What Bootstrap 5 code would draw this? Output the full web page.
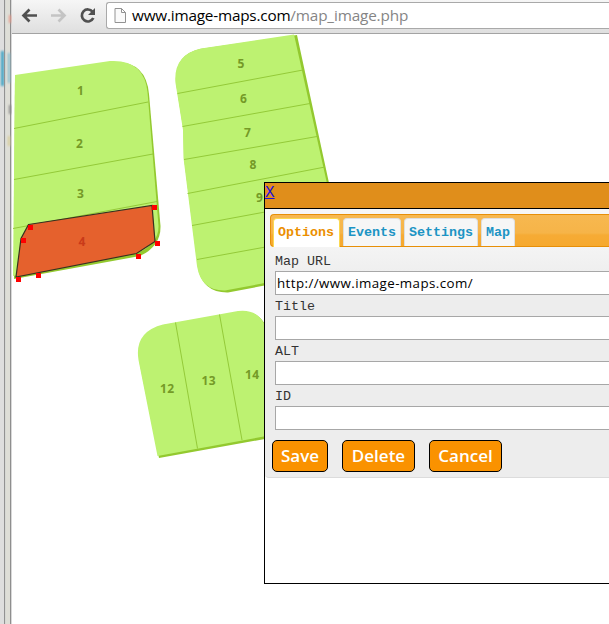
<!DOCTYPE html>
<html lang="en">
<head>
<meta charset="utf-8">
<meta name="viewport" content="width=device-width, initial-scale=1">
<title>Image map editor</title>
<link href="https://cdn.jsdelivr.net/npm/bootstrap@5.3.0/dist/css/bootstrap.min.css" rel="stylesheet">
<style>
body{width:609px;height:624px;background:#fff;font-family:"Open Sans","Noto Sans",sans-serif}
.frame-edge{width:12px;background:linear-gradient(90deg,#dedede 0 4px,#929292 4px 5px,#d6d8d4 5px 6px,#deded7 6px 10px,#8e8e8e 10px 11px,#d8d8d8 11px)}
.frame-edge svg{display:block}
.toolbar{height:34px;background:linear-gradient(#f6f6f6,#dfdfdf);border-bottom:1px solid #a3a3a3}
.nav-icons{width:94px;height:33px}
.address{height:27px;margin-top:2px;border:1px solid #a9a9a9;border-right:0;border-radius:3px 0 0 3px;background:#fff}
.address svg{margin-left:7px}
.url{font-size:15.3px;line-height:25px;margin-left:5px;color:#000;white-space:nowrap}
.url .host{letter-spacing:-.2px}
.url .path{letter-spacing:-.15px;color:#858585}
.canvas-map{display:block;width:597px;height:590px}
.plot-no{font:bold 12px "Noto Sans","Open Sans",sans-serif;fill:#759a27;text-anchor:middle}
.editor{left:264px;top:182px;width:345px;height:402px;border:1px solid #000;border-right:0;background:#fff}
.editor-head{height:26px;background:#e08e1b;border-bottom:1px solid #000}
.editor-head a{display:block;width:10px;font:16px/20px "Liberation Mono",monospace;color:#1a0fe0}
.editor-body{height:269px;padding-top:5px;border-bottom:1px solid #dcdcdc;border-bottom-left-radius:4px;background:linear-gradient(#f6f6f6 0,#f4f4f4 38px,#ededed 72px,#ededed)}
.tabs{height:33px;margin-left:5px;padding:3px 0 0 2px;gap:3px;border:1px solid #e78f08;border-right:0;border-radius:4px 0 0 4px;background:linear-gradient(#f7b850 0,#f6b448 18px,#f6ab35 20px,#f6a92f)}
.tabs .nav-link{height:28px;padding:0 4px;border:1px solid #dedede;border-bottom:0;border-radius:4px 4px 0 0;background:#f6f6f6;color:#1c94c4;font:bold 13.33px/27px "Liberation Mono",monospace}
.tabs .nav-link.active{height:29px;padding-right:5px;border-color:#fbd850;background:#fff;color:#eb8f00}
.field-label{display:block;height:24px;font:13.33px/30px "Liberation Mono",monospace;color:#333}
.fields{padding-left:10px}
.fields .form-control{height:24px;padding:0 1px;border:1px solid #a7a7a7;border-right:0;border-radius:0;background:#fff;color:#000;font:13.33px/22px "Open Sans",sans-serif;letter-spacing:.42px;margin-bottom:-3px}
.actions{gap:14px;padding:13px 0 0 7px}
.actions .btn{height:32px;padding:0;border:1px solid #000;border-radius:5px;background:#fa9200;color:#fff;font:600 17px/28px "Open Sans",sans-serif}
.w-save{width:56px}.w-wide{width:73px}
</style>
<script src="https://cdn.jsdelivr.net/npm/bootstrap@5.3.0/dist/js/bootstrap.bundle.min.js"></script>
</head>
<body class="overflow-hidden position-relative d-flex">
<aside class="frame-edge flex-shrink-0 h-100">
<svg width="12" height="200"><defs><filter id="soft"><feGaussianBlur stdDeviation="1.2"/></filter></defs><g filter="url(#soft)"><path fill="#43a4c4" d="M1 51h3v35H1z"/><path fill="#83bdd0" d="M8 53h2v30H8z"/><path fill="#e99a8b" d="M9 15h2v8H9z"/><path fill="#898989" d="M9 105h2v9H9z"/><path fill="#d8cc95" d="M8 136h2v10H8z"/></g><path fill="#929292" d="M4 0h1v200H4z"/></svg>
</aside>
<main class="flex-grow-1 overflow-hidden">
<header class="toolbar d-flex align-items-start">
<svg class="nav-icons flex-shrink-0" viewBox="12 0 94 33" fill="none">
<path d="M37 15.5H24M29.5 9.5l-6 6 6 6" stroke="#505050" stroke-width="2.7"/>
<path d="M51 15.5h13M58.5 9.5l6 6-6 6" stroke="#c4c4c4" stroke-width="2.7"/>
<path d="M92.6 11.8A6 6 0 1 0 93.3 18" stroke="#505050" stroke-width="2.7"/><path d="M95 8v7h-7z" fill="#505050"/>
</svg>
<div class="address flex-grow-1 d-flex align-items-center">
<svg width="13" height="17" viewBox="0 0 13 17" fill="#fafafa" stroke="#929292"><path d="M1 1.5h6.5l4 4v10H1zM7.5 1.5v4h4"/></svg>
<div class="url"><span class="host">www.image-maps.com</span><span class="path">/map_image.php</span></div>
</div>
</header>
<svg class="canvas-map" viewBox="12 34 597 590">
<g fill="#93c92f">
<path d="M15 76 112 62Q146 60 149 94L160.500 226Q161 246 140 256L14 279Z"/>
<path d="M200 49 297 35 345 257Q344 272 325 274L228 292.500Q203 293 198 268L184 158 183.500 130 176 83Q174 55 200 49Z"/>
<path d="M164 325 238 312Q264 309 269 337L287 435 159 458 140 365Q135 332 164 325Z"/>
</g>
<g fill="#bdf271">
<path d="M15 75 110 61Q144 59 147.500 92L158.500 226Q159 243 138 253L13 276Z"/>
<path d="M201 48.500 294 34.500 343 256Q342 269 323 272L225 290.500Q201 291 197 266L183.500 158 183 130 180 111 175.500 83Q173 55 201 48.500Z"/>
<path d="M163 324.500 238 311Q263 308 268 336L286 432.500 157.500 456 138.500 360Q134 332 163 324.500Z"/>
</g>
<g fill="none" stroke="#94ca39" stroke-width="1">
<path d="M14 128.500 148 102M14 179.500 153 154M13 228.500 157 201.500M177.500 93.500 303 70M182.500 126.500 310 103.500M184 159.500 317 136.500M187.500 193.500 325 167M192 225.500 330 200M197 259.500 337 234M175.500 322.500 197.500 448.500M219.500 314.500 242 440"/>
</g>
<g class="plot-no">
<text x="80.500" y="95">1</text><text x="79.500" y="148">2</text><text x="80.500" y="198">3</text>
<text x="241" y="68">5</text><text x="243.500" y="103">6</text><text x="247.500" y="137">7</text><text x="253" y="169">8</text><text x="259.500" y="202">9</text>
<text x="167" y="393" textLength="14">12</text><text x="208.500" y="385" textLength="14">13</text><text x="252" y="379" textLength="14">14</text>
</g>
<path d="M28.500 224.500 152 205.500 155 241.500 136.500 253.500 16 277 21 238.500Z" fill="#e5612d" stroke="#38301f" stroke-width="1.2"/>
<text class="plot-no" x="82" y="246" style="fill:#c93a19">4</text>
<path d="M28 225h5v5h-5zM21 238h5v5h-5zM16 277h5v5h-5zM36 273h5v5h-5zM136 254h5v5h-5zM155 241h5v5h-5zM152 205h5v5h-5z" fill="#f00"/>
</svg>
</main>
<section class="editor position-absolute">
<div class="editor-head"><a href="#">X</a></div>
<div class="editor-body">
<nav class="tabs nav flex-nowrap">
<a class="nav-link active" href="#">Options</a><a class="nav-link" href="#">Events</a><a class="nav-link" href="#">Settings</a><a class="nav-link" href="#">Map</a>
</nav>
<form>
<div class="fields">
<label class="field-label" for="map-url">Map URL</label><input id="map-url" class="form-control" value="http://www.image-maps.com/">
<label class="field-label" for="map-title">Title</label><input id="map-title" class="form-control">
<label class="field-label" for="map-alt">ALT</label><input id="map-alt" class="form-control">
<label class="field-label" for="map-id">ID</label><input id="map-id" class="form-control">
</div>
<div class="actions d-flex"><button type="button" class="btn w-save">Save</button><button type="button" class="btn w-wide">Delete</button><button type="button" class="btn w-wide">Cancel</button></div>
</form>
</div>
</section>
</body>
</html>
